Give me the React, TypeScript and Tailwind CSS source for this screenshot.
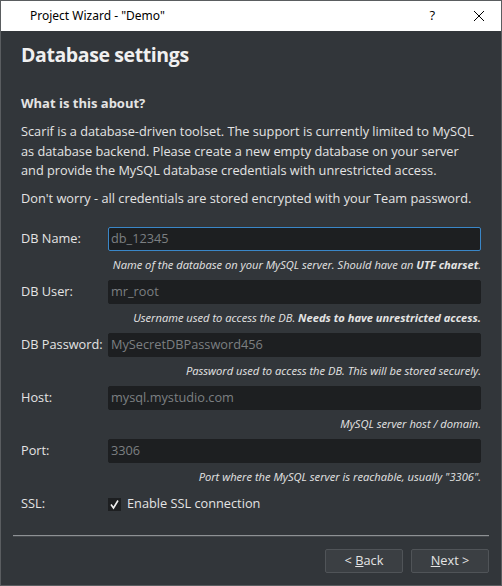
import React from 'react';

interface FieldProps {
  label: string;
  value: string;
  focused?: boolean;
  hint: React.ReactNode;
}

const Field: React.FC<FieldProps> = ({ label, value, focused, hint }) => {
  return (
    <div className="flex flex-col">
      <div className="flex items-center h-[24px]">
        <span className="w-[87px] shrink-0 text-[12.75px] text-[#e4e4e4]">{label}</span>
        <div
          className={
            focused
              ? 'flex-1 h-[24px] flex items-center px-[2px] bg-[#1d1f21] border border-[#3a87c8] rounded-[2px]'
              : 'flex-1 h-[24px] flex items-center px-[2px] bg-[#1d1f21] border border-[#1d1f21] rounded-[2px]'
          }
        >
          <span className="text-[12.75px] text-[#7c7f82]">{value}</span>
        </div>
      </div>
      <div className="h-[29px] flex items-center justify-end text-[11.15px] italic text-[#e4e4e4]">
        {hint}
      </div>
    </div>
  );
};

const App: React.FC = () => {
  return (
    <div
      className="w-[502px] h-[586px] flex flex-col bg-[#32363a] border border-[#5a5d60] overflow-hidden"
      style={{ fontFamily: '"Open Sans", "Noto Sans", sans-serif' }}
    >
      {/* title bar */}
      <div className="h-[30px] shrink-0 bg-white flex items-center">
        <span className="ml-[29px] text-[12px] text-black" style={{ fontFamily: '"Noto Sans", "Open Sans", sans-serif' }}>
          Project Wizard - "Demo"
        </span>
        <span className="ml-auto mr-[38px] text-[13px] text-black">?</span>
        <svg width="12" height="12" viewBox="0 0 12 12" className="mr-[16px]">
          <path d="M1 1 L11 11 M11 1 L1 11" stroke="#000" strokeWidth="1" />
        </svg>
      </div>

      <div className="flex-1 flex flex-col px-[20px] text-[#e4e4e4]">
        <h1 className="mt-[10px] text-[19.5px] font-bold leading-[28px] tracking-[-0.4px] text-[#f0f0f0]">
          Database settings
        </h1>

        <h2 className="mt-[24px] text-[13px] font-bold leading-[20px]">What is this about?</h2>

        <p className="mt-[9px] text-[12.75px] leading-[19.5px]">
          Scarif is a database-driven toolset. The support is currently limited to MySQL as database backend. Please
          create a new empty database on your server and provide the MySQL database credentials with unrestricted
          access.
        </p>
        <p className="mt-[8px] text-[12.75px] leading-[19.5px]">
          Don't worry - all credentials are stored encrypted with your Team password.
        </p>

        <div className="mt-[19px] flex flex-col">
          <Field
            label="DB Name:"
            value="db_12345"
            focused
            hint={
              <span>
                Name of the database on your MySQL server. Should have an <b>UTF charset</b>.
              </span>
            }
          />
          <Field
            label="DB User:"
            value="mr_root"
            hint={
              <span>
                Username used to access the DB. <b>Needs to have unrestricted access.</b>
              </span>
            }
          />
          <Field
            label="DB Password:"
            value="MySecretDBPassword456"
            hint={<span>Password used to access the DB. This will be stored securely.</span>}
          />
          <Field label="Host:" value="mysql.mystudio.com" hint={<span>MySQL server host / domain.</span>} />
          <Field
            label="Port:"
            value="3306"
            hint={<span>Port where the MySQL server is reachable, usually "3306".</span>}
          />
          <div className="flex items-center h-[24px]">
            <span className="w-[87px] shrink-0 text-[12.75px]">SSL:</span>
            <div className="w-[13px] h-[13px] bg-[#1d1f21] flex items-center justify-center">
              <svg width="11" height="11" viewBox="0 0 11 11">
                <path d="M2 5.5 L4.5 9 L9 1.5" stroke="#f0f0f0" strokeWidth="1.6" fill="none" />
              </svg>
            </div>
            <span className="ml-[6px] text-[12.75px]">Enable SSL connection</span>
          </div>
        </div>

        <div className="mt-[19px] -mx-[8px] h-[2px] bg-[#8e9194] border-b border-[#45494d]" />

        <div className="mt-[12px] -mr-[8px] flex justify-end gap-[8px]">
          <button className="w-[78px] h-[24px] bg-[#3b3f43] border border-[#505458] rounded-[2px] text-[12.75px] text-[#e4e4e4]">
            &lt; <u>B</u>ack
          </button>
          <button className="w-[78px] h-[24px] bg-[#3b3f43] border border-[#505458] rounded-[2px] text-[12.75px] text-[#e4e4e4]">
            <u>N</u>ext &gt;
          </button>
        </div>
      </div>
    </div>
  );
};

export default App;
